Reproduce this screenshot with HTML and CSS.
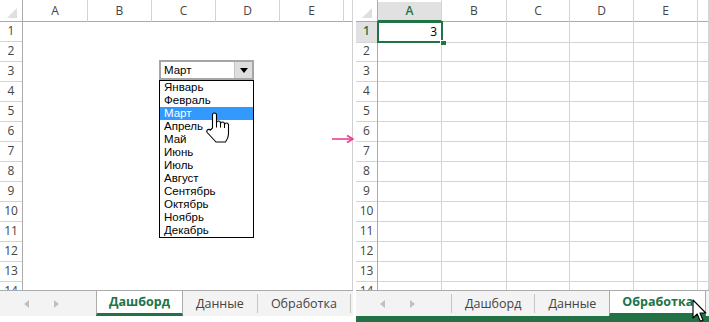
FILE: index.html
```html
<!DOCTYPE html>
<html lang="ru">
<head>
<meta charset="utf-8">
<title>Excel</title>
<link rel="stylesheet" href="styles.css">
</head>
<body>
<div class="screen">
  <section class="sheet sheet-left">
    <div class="grid">
      <div class="hdr">
        <div class="corner"><span class="tri"></span></div>
        <div class="ch">A</div><div class="ch">B</div><div class="ch">C</div><div class="ch">D</div><div class="ch">E</div><div class="ch"></div>
      </div>
      <div class="row"><div class="rh">1</div><div></div></div>
      <div class="row"><div class="rh">2</div><div></div></div>
      <div class="row"><div class="rh">3</div><div></div></div>
      <div class="row"><div class="rh">4</div><div></div></div>
      <div class="row"><div class="rh">5</div><div></div></div>
      <div class="row"><div class="rh">6</div><div></div></div>
      <div class="row"><div class="rh">7</div><div></div></div>
      <div class="row"><div class="rh">8</div><div></div></div>
      <div class="row"><div class="rh">9</div><div></div></div>
      <div class="row"><div class="rh">10</div><div></div></div>
      <div class="row"><div class="rh">11</div><div></div></div>
      <div class="row"><div class="rh">12</div><div></div></div>
      <div class="row"><div class="rh">13</div><div></div></div>
      <div class="row"><div class="rh">14</div><div></div></div>

      <div class="combo">
        <div class="combo-field">
          <span class="combo-text">Март</span>
          <span class="combo-btn"><span class="caret"></span></span>
        </div>
        <ul class="combo-list">
          <li>Январь</li>
          <li>Февраль</li>
          <li class="hl">Март</li>
          <li>Апрель</li>
          <li>Май</li>
          <li>Июнь</li>
          <li>Июль</li>
          <li>Август</li>
          <li>Сентябрь</li>
          <li>Октябрь</li>
          <li>Ноябрь</li>
          <li>Декабрь</li>
        </ul>
      </div>
      <svg class="hand" width="26" height="31" viewBox="0 0 26 31">
        <path d="M7.5,16 V3 a2,2 0 0 1 4,0 V11 a2,2 0 0 1 4,0 v1 a2,2 0 0 1 4,0 v1 a2,2 0 0 1 4,0 V22 q0,4 -3,8 H11 L2.2,20.5 a1.9,1.9 0 0 1 3.1,-2.4 Z" fill="#fff" stroke="#000" stroke-width="1.1" stroke-linejoin="round"/>
        <path d="M11.5,11 v4.5 M15.5,12 v3.5 M19.5,13 v3" stroke="#000" stroke-width="1" fill="none"/>
      </svg>
    </div>
    <div class="tabbar">
      <div class="nav"><span class="arr arr-l"></span><span class="arr arr-r"></span></div>
      <div class="tab active">Дашборд</div>
      <div class="tab">Данные</div>
      <div class="tab">Обработка</div>
    </div>
    <div class="foot"></div>
  </section>

  <section class="sheet sheet-right">
    <div class="grid">
      <div class="hdr">
        <div class="corner"><span class="tri"></span></div>
        <div class="ch sel">A</div><div class="ch">B</div><div class="ch">C</div><div class="ch">D</div><div class="ch">E</div><div class="ch"></div>
      </div>
      <div class="row"><div class="rh sel">1</div><div class="c num">3</div><div class="c"></div><div class="c"></div><div class="c"></div><div class="c"></div><div class="c"></div></div>
      <div class="row"><div class="rh">2</div><div class="c"></div><div class="c"></div><div class="c"></div><div class="c"></div><div class="c"></div><div class="c"></div></div>
      <div class="row"><div class="rh">3</div><div class="c"></div><div class="c"></div><div class="c"></div><div class="c"></div><div class="c"></div><div class="c"></div></div>
      <div class="row"><div class="rh">4</div><div class="c"></div><div class="c"></div><div class="c"></div><div class="c"></div><div class="c"></div><div class="c"></div></div>
      <div class="row"><div class="rh">5</div><div class="c"></div><div class="c"></div><div class="c"></div><div class="c"></div><div class="c"></div><div class="c"></div></div>
      <div class="row"><div class="rh">6</div><div class="c"></div><div class="c"></div><div class="c"></div><div class="c"></div><div class="c"></div><div class="c"></div></div>
      <div class="row"><div class="rh">7</div><div class="c"></div><div class="c"></div><div class="c"></div><div class="c"></div><div class="c"></div><div class="c"></div></div>
      <div class="row"><div class="rh">8</div><div class="c"></div><div class="c"></div><div class="c"></div><div class="c"></div><div class="c"></div><div class="c"></div></div>
      <div class="row"><div class="rh">9</div><div class="c"></div><div class="c"></div><div class="c"></div><div class="c"></div><div class="c"></div><div class="c"></div></div>
      <div class="row"><div class="rh">10</div><div class="c"></div><div class="c"></div><div class="c"></div><div class="c"></div><div class="c"></div><div class="c"></div></div>
      <div class="row"><div class="rh">11</div><div class="c"></div><div class="c"></div><div class="c"></div><div class="c"></div><div class="c"></div><div class="c"></div></div>
      <div class="row"><div class="rh">12</div><div class="c"></div><div class="c"></div><div class="c"></div><div class="c"></div><div class="c"></div><div class="c"></div></div>
      <div class="row"><div class="rh">13</div><div class="c"></div><div class="c"></div><div class="c"></div><div class="c"></div><div class="c"></div><div class="c"></div></div>
      <div class="row"><div class="rh">14</div><div class="c"></div><div class="c"></div><div class="c"></div><div class="c"></div><div class="c"></div><div class="c"></div></div>
      <div class="selection"><span class="handle"></span></div>
    </div>
    <div class="tabbar">
      <div class="nav"><span class="arr arr-l"></span><span class="arr arr-r"></span></div>
      <div class="tab">Дашборд</div>
      <div class="tab">Данные</div>
      <div class="tab active">Обработка</div>
    </div>
    <div class="foot status"></div>
  </section>
</div>

<svg class="pink-arrow" width="24" height="10" viewBox="0 0 24 10">
  <path d="M1,5 H21" stroke="#f23d8e" stroke-width="1.6"/>
  <path d="M16,1.5 L22,5 L16,8.5" stroke="#f23d8e" stroke-width="1.6" fill="none" stroke-linejoin="round"/>
</svg>

<svg class="pointer" width="17" height="24" viewBox="0 0 17 24">
  <path d="M1,1 V19 L5.2,15 L8.3,22.3 L11,21.2 L8,14 H13.8 Z" fill="#fff" stroke="#000" stroke-width="1.1" stroke-linejoin="round"/>
</svg>
</body>
</html>
```

FILE: styles.css
```css
* {
  box-sizing: border-box;
  margin: 0;
  padding: 0;
}

body {
  width: 709px;
  height: 322px;
  overflow: hidden;
  background: #fff;
  font-family: "Open Sans", "Noto Sans", sans-serif;
  color: #000;
  position: relative;
}

.screen {
  display: flex;
  gap: 3px;
}

.sheet {
  width: 353px;
  height: 322px;
  display: flex;
  flex-direction: column;
}

.grid {
  height: 290px;
  overflow: hidden;
  position: relative;
}

.hdr,
.row {
  display: grid;
}

.hdr {
  height: 21px;
}

.row {
  height: 20px;
}

.sheet-left .hdr {
  grid-template-columns: 23px 65px 64px 64px 64px 64px 1fr;
}

.sheet-left .row {
  grid-template-columns: 23px 1fr;
  border-right: 1px solid #d0d0d0;
}

.sheet-right .hdr,
.sheet-right .row {
  grid-template-columns: 22px 64px 65px 63px 64px 64px 1fr;
}

.corner {
  position: relative;
  border-right: 1px solid #ababab;
  border-bottom: 1px solid #ababab;
}

.tri {
  position: absolute;
  right: 5px;
  bottom: 3px;
  width: 0;
  height: 0;
  border-left: 10px solid transparent;
  border-bottom: 10px solid #dfdfdf;
}

.ch {
  border-right: 1px solid #d4d4d4;
  border-bottom: 1px solid #ababab;
  font-size: 12px;
  line-height: 21px;
  color: #444;
  text-align: center;
}

.ch.sel {
  padding-top: 2px;
  line-height: 17px;
  background: #e1e1e1;
  background-clip: content-box;
  color: #217346;
  font-weight: 600;
  border-bottom: 2px solid #217346;
}

.rh {
  border-right: 1px solid #ababab;
  border-bottom: 1px solid #d4d4d4;
  font-size: 12px;
  line-height: 20px;
  color: #444;
  text-align: center;
}

.rh.sel {
  background: #e1e1e1;
  color: #217346;
  font-weight: 600;
}

.c {
  border-right: 1px solid #d4d4d4;
  border-bottom: 1px solid #d4d4d4;
}

.num {
  font-size: 12px;
  line-height: 21px;
  text-align: right;
  padding-right: 4px;
}

.selection {
  position: absolute;
  left: 21px;
  top: 21px;
  width: 66px;
  height: 22px;
  border: 2px solid #217346;
}

.handle {
  position: absolute;
  right: -5px;
  bottom: -4px;
  width: 6px;
  height: 5px;
  background: #217346;
  border-left: 1px solid #fff;
  border-top: 1px solid #fff;
}

/* combo box */
.combo {
  position: absolute;
  left: 159px;
  top: 60px;
  width: 95px;
  font-family: "Liberation Sans", Arial, sans-serif;
  font-size: 11.5px;
}

.combo-field {
  height: 20px;
  display: flex;
  border: 2px solid #a6a6a6;
}

.combo-text {
  flex: 1;
  line-height: 16px;
  padding-left: 3px;
}

.combo-btn {
  width: 18px;
  background: #dedede;
  border-left: 1px solid #c4c4c4;
  display: flex;
  align-items: center;
  justify-content: center;
}

.caret {
  width: 0;
  height: 0;
  border-left: 4px solid transparent;
  border-right: 4px solid transparent;
  border-top: 5px solid #000;
}

.combo-list {
  list-style: none;
  border: 1px solid #000;
  height: 158px;
  background: #fff;
}

.combo-list li {
  height: 13px;
  line-height: 13px;
  padding-left: 4px;
}

.combo-list li.hl {
  background: #3399ff;
  color: #fff;
}

.hand {
  position: absolute;
  left: 205px;
  top: 112px;
}

/* tab bar */
.tabbar {
  height: 26px;
  display: flex;
  align-items: center;
  background: #f3f3f3;
  border-top: 1px solid #ababab;
  font-size: 12.5px;
  color: #444;
}

.nav {
  width: 97px;
  height: 19px;
  display: flex;
  align-items: center;
  padding-left: 24px;
  gap: 25px;
  border-right: 1px solid #c6c6c6;
}

.sheet-right .nav {
  width: 96px;
}

.arr {
  width: 0;
  height: 0;
  border-top: 4px solid transparent;
  border-bottom: 4px solid transparent;
}

.arr-l {
  border-right: 5px solid #c0c0c0;
}

.arr-r {
  border-left: 5px solid #c0c0c0;
}

.tab {
  height: 19px;
  line-height: 19px;
  padding: 0 13px;
  border-right: 1px solid #c6c6c6;
  white-space: nowrap;
}

.tab.active {
  height: 25px;
  line-height: 22px;
  margin-left: -1px;
  padding: 0 12px;
  background: #fff;
  border-left: 1px solid #ababab;
  border-right: 1px solid #ababab;
  border-bottom: 3px solid #217346;
  color: #217346;
  font-weight: 700;
  align-self: flex-end;
}

.foot {
  height: 6px;
}

.foot.status {
  background: #217346;
}

.pink-arrow {
  position: absolute;
  left: 331px;
  top: 134px;
}

.pointer {
  position: absolute;
  left: 692px;
  top: 299px;
}
```
